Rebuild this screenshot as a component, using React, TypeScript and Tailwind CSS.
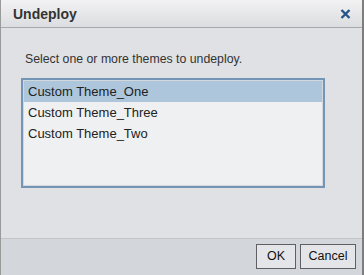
import React from "react";

const themes = ["Custom Theme_One", "Custom Theme_Three", "Custom Theme_Two"];

const App = () => {
  return (
    <div
      className="w-[364px] h-[275px] flex flex-col border-l border-l-[#9a9a9a] border-r-2 border-r-[#7d7d7d] bg-[#e0e1e4] text-[#333]"
      style={{ fontFamily: '"Liberation Sans", Arial, sans-serif' }}
    >
      <div className="h-[28px] flex items-center justify-between pl-[12px] pr-[11px] border-b border-[#a7a9ad] bg-gradient-to-b from-[#f2f2f3] to-[#dcdde0]">
        <span className="text-[14px] font-bold text-[#333] pt-[1px]">Undeploy</span>
        <svg width="11" height="10" viewBox="0 0 11 10" className="mt-[1px]">
          <path d="M1.5 1L9.5 9M9.5 1L1.5 9" stroke="#255487" strokeWidth="2.4" />
        </svg>
      </div>
      <div className="flex-1 pl-[20px] pt-[23px]">
        <p className="ml-[4px] text-[12.3px] leading-[16px] text-[#333]">
          Select one or more themes to undeploy.
        </p>
        <div className="mt-[11px] w-[304px] h-[110px] border-2 border-[#7495b6] bg-[#eff0f2]">
          <ul className="border border-[#d4d8dd] h-full">
            {themes.map((t, i) => (
              <li
                key={t}
                className={
                  i === 0
                    ? "h-[21px] pl-[4px] flex items-center text-[13px] text-[#222] bg-[#adc6dc]"
                    : "h-[21px] pl-[4px] flex items-center text-[13px] text-[#222]"
                }
              >
                {t}
              </li>
            ))}
          </ul>
        </div>
      </div>
      <div className="h-[37px] border-t border-[#c2c4c8] bg-[#d3d6da] flex justify-end items-start gap-[4px] pt-[5px] pr-[6px]">
        <button className="w-[40px] h-[25px] border border-[#5e5f62] bg-[#e4e5e8] text-[12.5px] font-medium text-[#111]">
          OK
        </button>
        <button className="w-[56px] h-[25px] border border-[#5e5f62] bg-[#e4e5e8] text-[12.5px] font-medium text-[#111]">
          Cancel
        </button>
      </div>
    </div>
  );
};

export default App;
